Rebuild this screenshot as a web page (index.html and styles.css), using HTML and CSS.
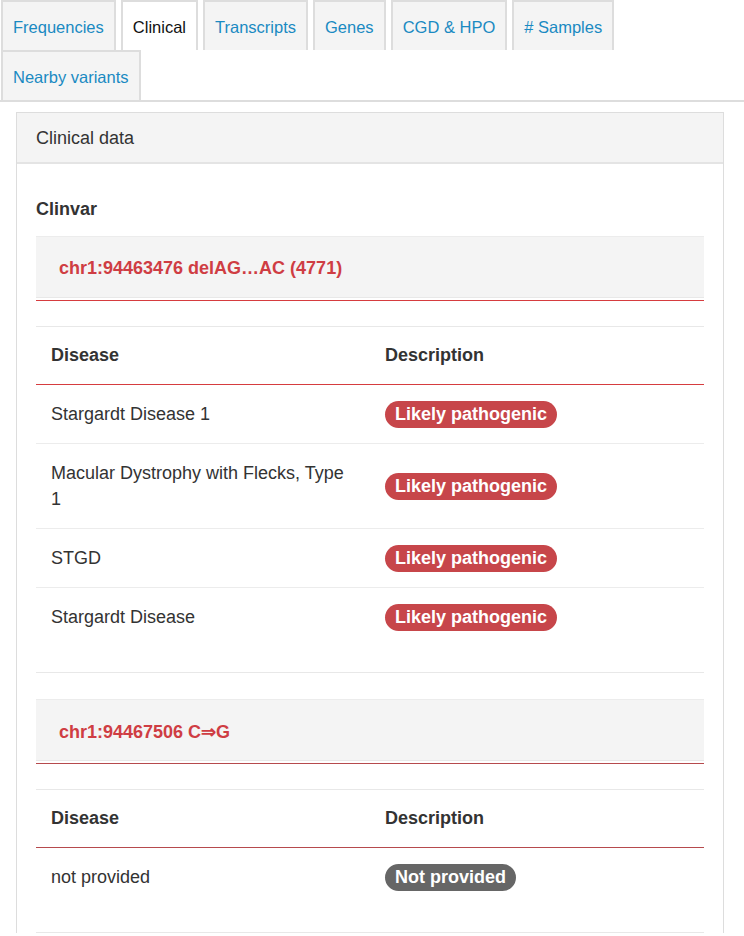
FILE: index.html
```html
<!DOCTYPE html>
<html>
<head>
<meta charset="utf-8">
<link rel="stylesheet" href="styles.css">
</head>
<body>
<ul class="tabs">
  <li class="tab"><a>Frequencies</a></li>
  <li class="tab active"><a>Clinical</a></li>
  <li class="tab"><a>Transcripts</a></li>
  <li class="tab"><a>Genes</a></li>
  <li class="tab"><a>CGD &amp; HPO</a></li>
  <li class="tab"><a># Samples</a></li>
  <li class="tab"><a>Nearby variants</a></li>
</ul>
<div class="panel">
  <div class="panel-heading">Clinical data</div>
  <div class="panel-body">
    <h4 class="section-title">Clinvar</h4>

    <div class="variant variant-a">
      <div class="variant-head"><div class="variant-box">chr1:94463476 delAG…AC (4771)</div></div>
      <div class="table-wrap">
        <table class="clin-table">
          <thead><tr><th>Disease</th><th>Description</th></tr></thead>
          <tbody>
            <tr><td>Stargardt Disease 1</td><td><span class="badge badge-red">Likely pathogenic</span></td></tr>
            <tr><td>Macular Dystrophy with Flecks, Type 1</td><td><span class="badge badge-red">Likely pathogenic</span></td></tr>
            <tr><td>STGD</td><td><span class="badge badge-red">Likely pathogenic</span></td></tr>
            <tr><td>Stargardt Disease</td><td><span class="badge badge-red">Likely pathogenic</span></td></tr>
          </tbody>
        </table>
      </div>
    </div>

    <div class="variant variant-b">
      <div class="variant-head"><div class="variant-box">chr1:94467506 C⇒G</div></div>
      <div class="table-wrap">
        <table class="clin-table">
          <thead><tr><th>Disease</th><th>Description</th></tr></thead>
          <tbody>
            <tr><td>not provided</td><td><span class="badge badge-grey">Not provided</span></td></tr>
          </tbody>
        </table>
      </div>
    </div>
  </div>
</div>
</body>
</html>
```
FILE: styles.css
```css
html, body {
  margin: 0;
  padding: 0;
  background: #fff;
  font-family: "Liberation Sans", Arial, sans-serif;
  color: #333;
}
.tabs {
  list-style: none;
  margin: 0;
  padding: 0 0 0 1px;
  display: flex;
  flex-wrap: wrap;
  column-gap: 5px;
  border-bottom: 2px solid #ddd;
}
.tab {
  height: 48px;
  border: 2px solid #ddd;
  border-bottom: none;
  background: #f4f4f4;
  padding: 0 10px;
  display: flex;
  align-items: center;
  font-size: 16.5px;
}
.tab a {
  color: #1a8ac2;
  padding-top: 3px;
}
.tab.active {
  background: #fff;
}
.tab.active a {
  color: #111;
}
.panel {
  margin: 10px 0 0 16px;
  width: 706px;
  border: 1px solid #ddd;
  border-bottom: none;
}
.panel-heading {
  background: #f4f4f4;
  height: 49px;
  border-bottom: 2px solid #e4e4e4;
  padding: 2px 19px 0 19px;
  box-sizing: border-box;
  height: 51px;
  display: flex;
  align-items: center;
  font-size: 18px;
  color: #333;
}
.panel-body {
  padding: 32px 19px 0 19px;
}
.section-title {
  margin: 0 0 14px 0;
  font-size: 18px;
  line-height: 26px;
  font-weight: bold;
}
.variant-head {
  padding-bottom: 2px;
  border-bottom: 1px solid #d63c3f;
}
.variant-b .variant-head {
  border-bottom-color: #b64a4d;
}
.variant-box {
  background: #f4f4f4;
  border-top: 1px solid #ececec;
  border-bottom: 1px solid #e8e8e8;
  padding: 3px 23px 0 23px;
  display: flex;
  align-items: center;
  box-sizing: border-box;
  height: 62px;
  color: #cf3d43;
  font-weight: bold;
  font-size: 18px;
}
.table-wrap {
  margin-top: 25px;
  border-top: 1px solid #e8e8e8;
  border-bottom: 1px solid #e8e8e8;
  padding-bottom: 26px;
  margin-bottom: 26px;
}
.clin-table {
  width: 100%;
  border-collapse: collapse;
  table-layout: fixed;
  font-size: 18px;
}
.clin-table th, .clin-table td {
  text-align: left;
  padding: 16px 15px;
  line-height: 26px;
  vertical-align: middle;
}
.clin-table th {
  padding-top: 15px;
  font-weight: bold;
  border-bottom: 1px solid #d63c3f;
}
.variant-b .clin-table th {
  border-bottom-color: #b64a4d;
}
.clin-table tbody tr + tr td {
  border-top: 1px solid #ececec;
}
.badge {
  display: inline-block;
  height: 27px;
  line-height: 27px;
  margin-bottom: -1px;
  padding: 0 10px;
  border-radius: 14px;
  color: #fff;
  font-weight: bold;
  font-size: 18px;
  vertical-align: top;
}
.badge-red {
  background: #c7464a;
}
.badge-grey {
  background: #666;
}
```
